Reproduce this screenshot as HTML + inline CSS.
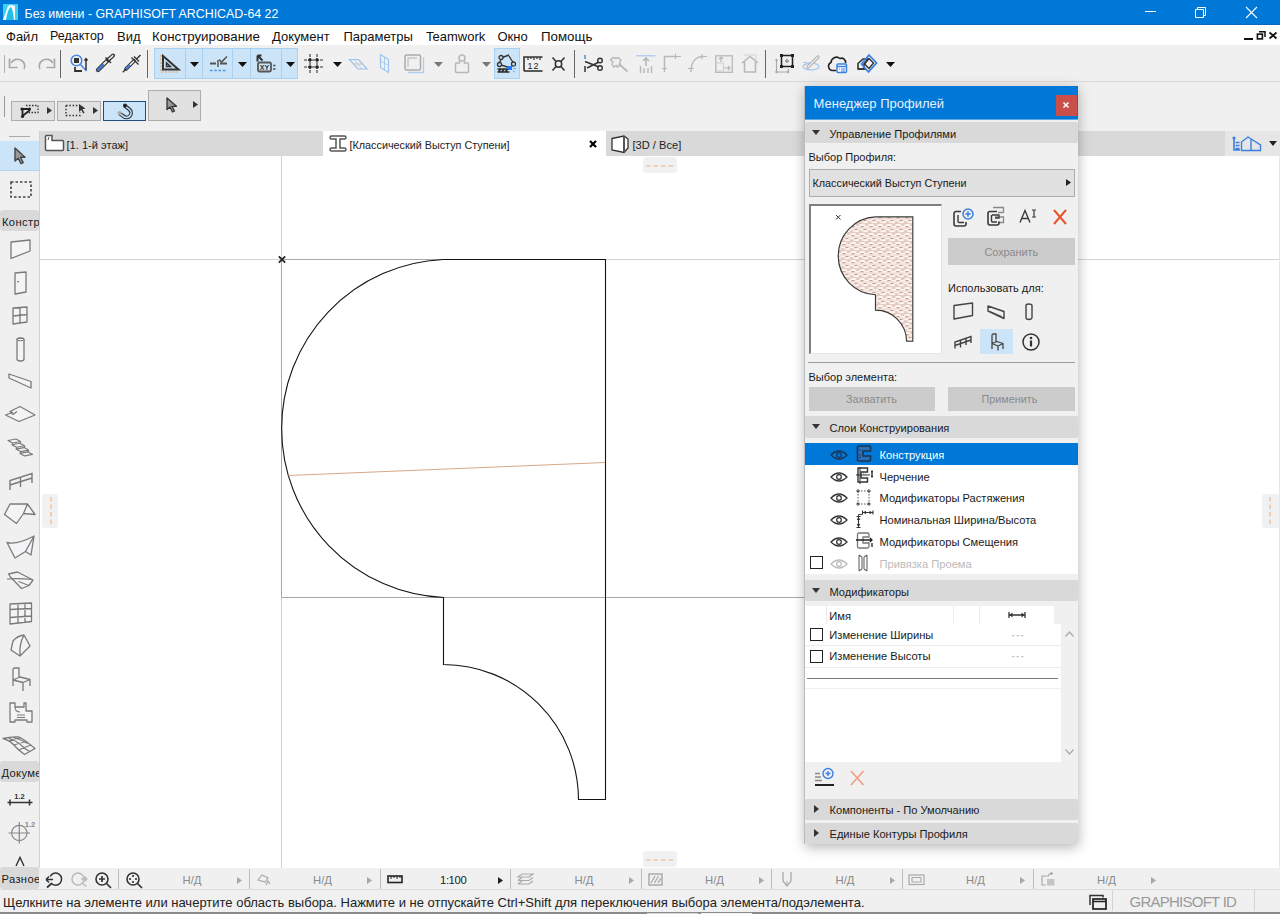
<!DOCTYPE html>
<html><head><meta charset="utf-8">
<style>
*{margin:0;padding:0;box-sizing:border-box}
html,body{width:1280px;height:914px;overflow:hidden;background:#f0f0f0;font-family:"Liberation Sans",sans-serif;font-size:12px;color:#1a1a1a}
.a{position:absolute}
svg{position:absolute;overflow:visible}
#title{left:0;top:0;width:1280px;height:25px;background:#0078d7;color:#fff;border-bottom:1px solid #0a68c0}
#menu{left:0;top:25px;width:1280px;height:20px;background:#fff}
#menu span{position:absolute;top:4px;font-size:13px;color:#111}
#tb1{left:0;top:45px;width:1280px;height:36px;background:#f0f0f0}
#tbline{left:0;top:81px;width:1280px;height:1px;background:#d8d8d8}
#tb2{left:0;top:82px;width:1280px;height:49px;background:#f0f0f0}
#tabs{left:40px;top:131px;width:1240px;height:25px;background:#d9d9d9}
#tbox{left:0;top:131px;width:40px;height:737px;background:#f0f0f0;border-right:1px solid #d0d0d0}
#draw{left:40px;top:156px;width:1240px;height:712px;background:#fff}
#status1{left:0;top:868px;width:1280px;height:21px;background:#f0f0f0}
#status2{left:0;top:889px;width:1280px;height:22px;background:#f0f0f0;border-top:1px solid #dcdcdc}
#bottom{left:0;top:912px;width:1280px;height:2px;background:#8a8a8a}
#panel{left:805px;top:86px;width:273px;height:758px;background:#f0f0f0;box-shadow:0 3px 12px rgba(0,0,0,.3)}
.sh{position:absolute;left:0;width:273px;height:21px;background:#d9d9d9;border-radius:2px}
.sh span{position:absolute;left:24.5px;top:6px;font-size:11.1px;color:#1a1a1a}
.sh i{position:absolute;left:7px;top:8px;width:0;height:0;border-left:4px solid transparent;border-right:4px solid transparent;border-top:5px solid #333}
.sh i.r{left:9px;top:6px;border-top:4px solid transparent;border-bottom:4px solid transparent;border-left:5px solid #333;border-right:0}
.t{position:absolute;white-space:nowrap}
</style></head><body>
<div id="title" class="a">
<svg style="left:3px;top:4px" width="15" height="16" viewBox="0 0 15 16"><rect width="15" height="16" fill="#3fd0f0"/><path d="M0 16 L5 2 Q8 0 12 2 L12 16 Z" fill="#f4fbff"/><path d="M3 16 Q5 4 8 3 Q10 6 11 16 Z" fill="#1fbfe8"/></svg>
<span class="t" style="left:24.5px;top:6.5px;font-size:12.4px;color:#fff">Без имени - GRAPHISOFT ARCHICAD-64 22</span>
<div class="a" style="left:1145px;top:11px;width:11px;height:1px;background:#fff"></div>
<svg style="left:1195px;top:7px" width="11" height="11" viewBox="0 0 11 11"><path d="M0.5 2.5h8v8h-8z M2.5 2.5v-2h8v8h-2" fill="none" stroke="#fff" stroke-width="1"/></svg>
<svg style="left:1246px;top:7px" width="11" height="11" viewBox="0 0 11 11"><path d="M0 0L11 11M11 0L0 11" stroke="#fff" stroke-width="1.1"/></svg>
</div>
<div id="menu" class="a">
<span style="left:6px">Файл</span><span style="left:50px;font-size:12.5px">Редактор</span><span style="left:117px">Вид</span><span style="left:152px;font-size:13.3px">Конструирование</span><span style="left:272px">Документ</span><span style="left:343.5px">Параметры</span><span style="left:426px">Teamwork</span><span style="left:497.5px">Окно</span><span style="left:541px;font-size:13.3px">Помощь</span>
<div class="a" style="left:1244px;top:13px;width:9px;height:2px;background:#111"></div>
<svg style="left:1256px;top:6px" width="10" height="10" viewBox="0 0 10 10"><rect x="1.4" y="3.1" width="5" height="4.8" fill="none" stroke="#111" stroke-width="1.6"/><path d="M3 0.8H9V6" fill="none" stroke="#111" stroke-width="1.5"/></svg>
<svg style="left:1269px;top:7px" width="8" height="7" viewBox="0 0 8 7"><path d="M0.5 0.5L7.5 6.5M7.5 0.5L0.5 6.5" stroke="#111" stroke-width="1.7"/></svg>
</div>
<div id="tb1" class="a">
<div class="a" style="left:3.5px;top:10px;width:1.5px;height:18px;background:#b0b0b0"></div>
<svg style="left:8px;top:11px" width="21" height="15" viewBox="0 0 21 15"><path d="M3 7 A7 6.5 0 1 1 16 13" fill="none" stroke="#a8a8a8" stroke-width="1.7"/><path d="M1.5 2.5v9h8" fill="none" stroke="#a8a8a8" stroke-width="1.7"/></svg>
<svg style="left:35px;top:11px" width="21" height="15" viewBox="0 0 21 15"><path d="M18 7 A7 6.5 0 1 0 5 13" fill="none" stroke="#a8a8a8" stroke-width="1.7"/><path d="M19.5 2.5v9h-8" fill="none" stroke="#a8a8a8" stroke-width="1.7"/></svg>
<div class="a" style="left:60px;top:5px;width:1px;height:28px;background:#666"></div>
<svg style="left:70px;top:9px" width="19" height="19" viewBox="0 0 19 19"><circle cx="6.5" cy="6.5" r="5.3" fill="none" stroke="#4a8ae0" stroke-width="1.6"/><rect x="4" y="4" width="5" height="5" fill="#333"/><path d="M10.5 10.5L16.5 17" stroke="#4a8ae0" stroke-width="1.6"/><path d="M16 16V5M14.5 6.5l1.5-1.8 1.5 1.8" stroke="#333" stroke-width="1.5" fill="none"/><path d="M5 13v4h7" stroke="#333" stroke-width="1.8" fill="none"/></svg>
<svg style="left:95px;top:9px" width="21" height="19" viewBox="0 0 21 19"><path d="M3 16L13.5 5.5" stroke="#333" stroke-width="4.4" stroke-linecap="round"/><path d="M3 16L13.5 5.5" stroke="#f0f0f0" stroke-width="2" stroke-linecap="round"/><path d="M3 16L8 11" stroke="#3a78d8" stroke-width="2.4" stroke-linecap="round"/><path d="M13 6L18 1.5" stroke="#333" stroke-width="4" stroke-linecap="round"/><path d="M13.5 5.5L17.8 1.7" stroke="#f0f0f0" stroke-width="1.6" stroke-linecap="round"/><path d="M10.5 3.5l5.5 5.5" stroke="#333" stroke-width="1.5"/></svg>
<svg style="left:122px;top:9px" width="20" height="19" viewBox="0 0 20 19"><path d="M0.8 18.2L3.5 15.5" stroke="#333" stroke-width="1.3"/><path d="M4 15L12 7" stroke="#333" stroke-width="3.8" stroke-linecap="round"/><path d="M4 15L12 7" stroke="#f0f0f0" stroke-width="1.6"/><path d="M4 15L8 11" stroke="#3a78d8" stroke-width="2.2"/><path d="M9.5 3.5l7 7M12 2.5l5 5M14.5 5L18.5 1" stroke="#333" stroke-width="1.4"/></svg>
<div class="a" style="left:147px;top:5px;width:1px;height:28px;background:#666"></div>
<div class="a" style="left:154px;top:3px;width:144px;height:31px;background:#cce4f7;border:1px solid #a8d0f0"></div>
<div class="a" style="left:185px;top:4px;width:1px;height:29px;background:#a8d0f0"></div>
<div class="a" style="left:201.5px;top:4px;width:1px;height:29px;background:#a8d0f0"></div>
<div class="a" style="left:232px;top:4px;width:1px;height:29px;background:#a8d0f0"></div>
<div class="a" style="left:250px;top:4px;width:1px;height:29px;background:#a8d0f0"></div>
<div class="a" style="left:280.5px;top:4px;width:1px;height:29px;background:#a8d0f0"></div>
<svg style="left:160px;top:9px" width="20" height="19" viewBox="0 0 20 19"><path d="M1 1v17h18" fill="none" stroke="#e0a060" stroke-width="1.2" stroke-dasharray="2 1.5"/><path d="M3 2v13.5h15.5z" fill="none" stroke="#333" stroke-width="2"/><path d="M6.5 9v3.5h4z" fill="none" stroke="#333" stroke-width="1.5"/></svg>
<svg style="left:189.5px;top:17px" width="9" height="5" viewBox="0 0 9 5"><path d="M0 0h9L4.5 5z" fill="#111"/></svg>
<svg style="left:210px;top:11px" width="18" height="16" viewBox="0 0 18 16"><path d="M0 7.5h6M10 7.5h7" stroke="#555" stroke-width="1.8"/><path d="M8 4v7" stroke="#555" stroke-width="1.5"/><path d="M9 3.5l2.5 2.5L17 0.5" fill="none" stroke="#555" stroke-width="1.6"/><path d="M0 14.5h17" stroke="#4a90e2" stroke-width="1.6" stroke-dasharray="2.5 1.8"/></svg>
<svg style="left:237.5px;top:17px" width="9" height="5" viewBox="0 0 9 5"><path d="M0 0h9L4.5 5z" fill="#111"/></svg>
<svg style="left:257px;top:10px" width="20" height="18" viewBox="0 0 20 18"><path d="M0.5 0.5v6M0.5 0.5h4M0.5 0.5l5 5" stroke="#333" stroke-width="2" fill="none"/><rect x="1" y="7.5" width="13" height="9" rx="1.5" fill="none" stroke="#555" stroke-width="1.8"/><text x="7.5" y="15" font-size="7" font-weight="bold" font-family="Liberation Sans" text-anchor="middle" fill="#333">XY</text><path d="M16 10.5h2.5M16 14h2.5" stroke="#555" stroke-width="1.6"/></svg>
<svg style="left:285.5px;top:17px" width="9" height="5" viewBox="0 0 9 5"><path d="M0 0h9L4.5 5z" fill="#111"/></svg>
<svg style="left:304px;top:9px" width="19" height="19" viewBox="0 0 19 19"><path d="M6 0v19M13 0v19M0 6h19M0 13h19" stroke="#333" stroke-width="1.1" stroke-dasharray="3 1"/><circle cx="6" cy="6" r="1.8" fill="#222"/><circle cx="13" cy="6" r="1.8" fill="#222"/><circle cx="6" cy="13" r="1.8" fill="#222"/><circle cx="13" cy="13" r="1.8" fill="#222"/></svg>
<svg style="left:333px;top:17px" width="9" height="5" viewBox="0 0 9 5"><path d="M0 0h9L4.5 5z" fill="#111"/></svg>
<svg style="left:348.5px;top:14px" width="19" height="11" viewBox="0 0 19 11"><path d="M0.5 0.5h9l8.5 9.5h-9z" fill="none" stroke="#9cc4ee" stroke-width="1.2"/><path d="M4.5 5h9" stroke="#c8c0a8" stroke-width="1"/><path d="M5 0.5l8 9.5" stroke="#9cc4ee" stroke-width="0.8"/></svg>
<svg style="left:380px;top:9px" width="9" height="19" viewBox="0 0 9 19"><path d="M0.5 0.5l8 5v13l-8-5z" fill="none" stroke="#9cc4ee" stroke-width="1.2"/><path d="M4.5 3v13M0.5 7l8 4.5" stroke="#9cc4ee" stroke-width="0.8"/></svg>
<svg style="left:403.5px;top:9px" width="20" height="19" viewBox="0 0 20 19"><path d="M4 18.5h15.5V3.5" fill="none" stroke="#aecdf0" stroke-width="1.3"/><rect x="1" y="1" width="15.5" height="15" rx="1.5" fill="none" stroke="#aaa" stroke-width="1.5"/><path d="M4 13V4h9" fill="none" stroke="#c4c4c4" stroke-width="1.3"/></svg>
<svg style="left:433.5px;top:17px" width="9" height="5" viewBox="0 0 9 5"><path d="M0 0h9L4.5 5z" fill="#777"/></svg>
<svg style="left:455px;top:9px" width="14" height="19" viewBox="0 0 14 19"><circle cx="7" cy="4" r="3" fill="none" stroke="#b8b8b8" stroke-width="1.5"/><path d="M4.5 6.5v2.5H1.5a1 1 0 0 0-1 1V17.5a1 1 0 0 0 1 1h11a1 1 0 0 0 1-1V10a1 1 0 0 0-1-1H9.5V6.5" fill="none" stroke="#b8b8b8" stroke-width="1.5"/></svg>
<svg style="left:482px;top:17px" width="9" height="5" viewBox="0 0 9 5"><path d="M0 0h9L4.5 5z" fill="#777"/></svg>
<div class="a" style="left:494px;top:3px;width:26px;height:31px;background:#cce4f7;border:1px solid #a8d0f0"></div>
<svg style="left:497px;top:9px" width="20" height="19" viewBox="0 0 20 19"><path d="M4 4L12 1M4 5L2 10.5M4 11L14 14M12 2L17 10" stroke="#333" stroke-width="1.4"/><circle cx="4" cy="3.5" r="2" fill="#cce4f7" stroke="#333" stroke-width="1.3"/><circle cx="2.5" cy="10.5" r="2" fill="#cce4f7" stroke="#333" stroke-width="1.3"/><circle cx="16.5" cy="10" r="2" fill="#cce4f7" stroke="#333" stroke-width="1.3"/><path d="M0.5 15h10M0.5 18h12M1 18l3-3M4.5 18l3-3M8 18l3-3" stroke="#2a2a2a" stroke-width="1.6"/><rect x="11" y="12" width="4" height="4" fill="#1f78ff"/><path d="M16 12l2-1M16.5 14.5h2.5M16 17l2 1" stroke="#5aa0f0" stroke-width="0.9"/></svg>
<svg style="left:522.5px;top:11px" width="20" height="16" viewBox="0 0 20 16"><path d="M1 15V1h18.5" fill="none" stroke="#333" stroke-width="1.6"/><path d="M1 15h18.5" stroke="#333" stroke-width="1.6"/><path d="M5 1v3M8 1v2M11 1v3M14 1v2M17 1v3" stroke="#333" stroke-width="1.2"/><text x="10.5" y="13" font-size="9" font-family="Liberation Sans" text-anchor="middle" fill="#222" letter-spacing="1">12</text></svg>
<svg style="left:552px;top:11.5px" width="13" height="14" viewBox="0 0 13 14"><circle cx="6.5" cy="7" r="3.2" fill="none" stroke="#333" stroke-width="1.5"/><path d="M0.5 0.5l3.5 4M12.5 0.5l-3.5 4M0.5 13.5l3.5-4M12.5 13.5l-3.5-4" stroke="#333" stroke-width="1.5"/></svg>
<div class="a" style="left:574px;top:5px;width:1px;height:28px;background:#666"></div>
<svg style="left:584px;top:9px" width="19" height="19" viewBox="0 0 19 19"><path d="M1 1v4" stroke="#4a90e2" stroke-width="1.5"/><path d="M1 12v6" stroke="#333" stroke-width="1.5"/><path d="M1 7.5L15 13M3 14L15 8" stroke="#333" stroke-width="1.5"/><circle cx="16" cy="6.5" r="2.3" fill="none" stroke="#333" stroke-width="1.4"/><circle cx="16" cy="14" r="2.3" fill="none" stroke="#333" stroke-width="1.4"/></svg>
<svg style="left:610px;top:11px" width="19" height="16" viewBox="0 0 19 16"><path d="M3 1.5l3 1 2-1 3 2.5-1.5 3 1 2-3 2-1-1.5-3 1.5-1.5-3 1-2-2.5-2z" fill="none" stroke="#b8b8b8" stroke-width="1.4"/><path d="M9 8l8.5 7.5" stroke="#b8b8b8" stroke-width="1.8"/></svg>
<svg style="left:635.5px;top:10px" width="20" height="19" viewBox="0 0 20 19"><path d="M0 0.8h19.5" stroke="#aac4ee" stroke-width="1.2"/><path d="M10 3v8M7 6l3-3 3 3" fill="none" stroke="#b8b8b8" stroke-width="1.6"/><path d="M4.5 11v7M8 13v5M12 13v5M15.5 11v7" stroke="#b8b8b8" stroke-width="1.4"/></svg>
<svg style="left:662px;top:9px" width="19" height="19" viewBox="0 0 19 19"><path d="M2.5 18V2.5h11" fill="none" stroke="#b8b8b8" stroke-width="1.5"/><path d="M0 14.5h5M13.5 0v5M12 2.5h7" stroke="#b8b8b8" stroke-width="1.2"/></svg>
<svg style="left:688px;top:9px" width="19" height="19" viewBox="0 0 19 19"><path d="M3 18C3 9 7 3 14 2.5" fill="none" stroke="#b8b8b8" stroke-width="1.5"/><path d="M0 14.5h6M14 0v5M12 2.5h7" stroke="#b8b8b8" stroke-width="1.2"/></svg>
<svg style="left:715px;top:9.5px" width="18" height="18" viewBox="0 0 18 18"><rect x="0.8" y="0.8" width="16.5" height="16.5" fill="none" stroke="#b8b8b8" stroke-width="1.3"/><path d="M6 7V2M4 4l2-2 2 2M9 13h6M13 11l2 2-2 2" fill="none" stroke="#b8b8b8" stroke-width="1.2"/><rect x="1.5" y="8" width="7" height="8" fill="none" stroke="#d0d0d0" stroke-width="1"/></svg>
<svg style="left:741px;top:9px" width="18" height="19" viewBox="0 0 18 19"><path d="M1 9L9 2.5 17 9M3.5 7.5V18h11V7.5" fill="none" stroke="#b8b8b8" stroke-width="1.6"/><path d="M3 1h12v5" fill="none" stroke="#d4d4d4" stroke-width="1"/></svg>
<div class="a" style="left:765px;top:5px;width:1px;height:28px;background:#666"></div>
<svg style="left:775px;top:9px" width="20" height="19" viewBox="0 0 20 19"><path d="M1.5 6v12h12V15" fill="none" stroke="#aaa" stroke-width="1.2"/><circle cx="1.5" cy="6" r="1.2" fill="#aaa"/><circle cx="1.5" cy="18" r="1.2" fill="#aaa"/><circle cx="13" cy="18" r="1.2" fill="#aaa"/><rect x="6.5" y="1.5" width="11" height="11" fill="none" stroke="#222" stroke-width="1.5"/><rect x="5" y="0" width="3" height="3" fill="#222"/><rect x="16" y="0" width="3" height="3" fill="#222"/><rect x="5" y="11" width="3" height="3" fill="#222"/><rect x="16" y="11" width="3" height="3" fill="#222"/><circle cx="12" cy="7" r="1.3" fill="none" stroke="#555" stroke-width="0.8"/></svg>
<svg style="left:802px;top:10px" width="19" height="16" viewBox="0 0 19 16"><ellipse cx="9" cy="11.5" rx="8" ry="3.5" fill="none" stroke="#a8c8f0" stroke-width="1.4"/><path d="M6 12L16 2" stroke="#aaa" stroke-width="3.2" stroke-linecap="round"/><path d="M6 12L16 2" stroke="#f0f0f0" stroke-width="1.4" stroke-linecap="round"/><path d="M1 7.5h4M2 9.5h3" stroke="#b0c4e0" stroke-width="0.9"/></svg>
<svg style="left:827.5px;top:9px" width="19" height="19" viewBox="0 0 19 19"><path d="M8 16.5H5A4.2 4.2 0 0 1 3 8.5 5.5 5.5 0 0 1 12 4.5 4 4 0 0 1 17.5 9" fill="none" stroke="#222" stroke-width="1.6"/><rect x="9" y="10" width="9.5" height="8.5" rx="1" fill="#fff" stroke="#3a80e0" stroke-width="1.5"/><path d="M9 12.5h9.5" stroke="#3a80e0" stroke-width="1.5"/><path d="M11 15h1M13 15h4M13 17h4" stroke="#3a80e0" stroke-width="1"/></svg>
<svg style="left:857px;top:9px" width="20" height="19" viewBox="0 0 20 19"><path d="M1 15V9.5L6 5h5l-4 5v5z" fill="none" stroke="#333" stroke-width="1.6"/><path d="M1 15h8" stroke="#333" stroke-width="1.6"/><path d="M4.5 10l7.5-9 7.5 8-8 9z" fill="none" stroke="#3a80e0" stroke-width="1.8"/><path d="M7.5 10l4.5-5.5 4.5 4.5-4.5 5.5z" fill="none" stroke="#333" stroke-width="1.4"/></svg>
<svg style="left:886px;top:17px" width="9" height="5" viewBox="0 0 9 5"><path d="M0 0h9L4.5 5z" fill="#111"/></svg>
</div>
<div id="tbline" class="a"></div>
<div id="tb2" class="a">
<div class="a" style="left:4px;top:14px;width:1px;height:21px;background:#999"></div>
<div class="a" style="left:11px;top:19px;width:44px;height:20px;background:#e1e1e1;border:1px solid #adadad"></div>
<svg style="left:19.5px;top:21.5px" width="19" height="14" viewBox="0 0 19 14"><path d="M6 1.5h12v7h-11" fill="none" stroke="#333" stroke-width="1.3" stroke-dasharray="1.5 1.5"/><path d="M1.5 5h8M2.5 5l0 8M2.5 12L10 6" stroke="#222" stroke-width="1.8"/><circle cx="2" cy="5" r="1.6" fill="#222"/><circle cx="2.5" cy="12.5" r="1.6" fill="#222"/><circle cx="9.5" cy="5" r="1.6" fill="#222"/></svg>
<svg style="left:47px;top:25px" width="5" height="7" viewBox="0 0 5 7"><path d="M0 0L5 3.5 0 7z" fill="#333"/></svg>
<div class="a" style="left:57px;top:19px;width:44px;height:20px;background:#e1e1e1;border:1px solid #adadad"></div>
<svg style="left:65px;top:21.5px" width="21" height="13" viewBox="0 0 21 13"><path d="M1 1.5h13M1 1.5v10h14v-3" fill="none" stroke="#333" stroke-width="1.4" stroke-dasharray="1.5 1.8"/><path d="M14 0l6.5 4.5-3 0.8 2 3.5-1.3 0.7-2-3.5-2.2 2z" fill="#333"/></svg>
<svg style="left:93px;top:25px" width="5" height="7" viewBox="0 0 5 7"><path d="M0 0L5 3.5 0 7z" fill="#333"/></svg>
<div class="a" style="left:103px;top:19px;width:43px;height:20px;background:#cce4f7;border:1.5px solid #1e4e7e"></div>
<svg style="left:116.5px;top:21px" width="17" height="16" viewBox="0 0 17 16"><path d="M7.5 2.5l5 4a4.5 4.5 0 0 1-6 6.8L2.5 10.5" fill="none" stroke="#2a3440" stroke-width="3.8"/><path d="M7.5 2.5l5 4a4.5 4.5 0 0 1-6 6.8L2.5 10.5" fill="none" stroke="#cce4f7" stroke-width="1.6"/><circle cx="8" cy="2.5" r="2" fill="#222"/><circle cx="2.5" cy="10" r="2" fill="#aaa"/></svg>
<div class="a" style="left:148px;top:8px;width:53px;height:31px;background:#e1e1e1;border:1px solid #adadad"></div>
<svg style="left:165.5px;top:96.5px;top:14.5px" width="12" height="16" viewBox="0 0 12 16"><path d="M1 1v11.5l3-2.5 2.5 5 2-1-2.5-4.7h4.5z" fill="#999" stroke="#333" stroke-width="1.3" stroke-linejoin="round"/></svg>
<svg style="left:193px;top:18.5px" width="5" height="7" viewBox="0 0 5 7"><path d="M0 0L5 3.5 0 7z" fill="#333"/></svg>
</div>
<div id="tabs" class="a">
<svg style="left:4px;top:4px" width="20" height="16" viewBox="0 0 20 16"><path d="M1.5 1.5a1 1 0 0 1 1-1h5.5v5h10.5a1 1 0 0 1 1 1v8a1 1 0 0 1-1 1H2.5a1 1 0 0 1-1-1z" fill="#fff" stroke="#555" stroke-width="1.5"/><path d="M4 5L5 2" stroke="#555" stroke-width="1"/></svg>
<span class="t" style="left:26.5px;top:7.5px;font-size:11.1px;color:#222">[1. 1-й этаж]</span>
<div class="a" style="left:282.5px;top:0;width:283.5px;height:25px;background:#fff"></div>
<svg style="left:288.5px;top:4px" width="18" height="17" viewBox="0 0 18 17"><path d="M2.5 1h13a1.5 1.5 0 0 1 0 3H11v9h4.5a1.5 1.5 0 0 1 0 3h-13a1.5 1.5 0 0 1 0-3H7V4H2.5a1.5 1.5 0 0 1 0-3z" fill="#fff" stroke="#555" stroke-width="1.5"/></svg>
<span class="t" style="left:309.5px;top:7.5px;font-size:10.8px;color:#222">[Классический Выступ Ступени]</span>
<svg style="left:548.5px;top:8.5px" width="8" height="8" viewBox="0 0 8 8"><path d="M1 1L7 7M7 1L1 7" stroke="#000" stroke-width="2.2"/></svg>
<svg style="left:571px;top:4px" width="18" height="18" viewBox="0 0 18 18"><path d="M1 3.5l12-2.5 4 3v9l-4 4.5-12-2.5z" fill="#fff" stroke="#333" stroke-width="1.3"/><path d="M13 1v16" stroke="#555" stroke-width="2"/></svg>
<span class="t" style="left:592.5px;top:7.5px;font-size:11.1px;color:#222">[3D / Все]</span>
<div class="a" style="left:1185px;top:0;width:55px;height:25px;background:#e6e6e6"></div>
<svg style="left:1192px;top:4.5px" width="30" height="16" viewBox="0 0 30 16"><circle cx="2" cy="2" r="1.6" fill="#3a80e0"/><path d="M2 3v11h6M3.5 6.5h4M3.5 9.5h4M3.5 12.5h4" fill="none" stroke="#3a80e0" stroke-width="1.6"/><path d="M9.5 14.5V6l6.5-5 12.5 8v5.5z M19 3v11.5M16 1l12.5 8" fill="none" stroke="#3a80e0" stroke-width="1.4"/></svg>
<svg style="left:1228.5px;top:10px" width="8" height="5" viewBox="0 0 8 5"><path d="M0 0h8L4 5z" fill="#222"/></svg>
</div>
<div id="tbox" class="a">
<div class="a" style="left:9px;top:5px;width:21px;height:1px;background:#aaa"></div>
<div class="a" style="left:0;top:10px;width:39px;height:30px;background:#cce4f7;border-bottom:1px solid #b4d4f0"></div>
<svg style="left:14px;top:16px" width="13" height="18" viewBox="0 0 13 18"><path d="M1 1v13l3.2-2.8 2.8 5.5 2.2-1.1-2.7-5.4H11z" fill="#999" stroke="#444" stroke-width="1.4" stroke-linejoin="round"/></svg>
<svg style="left:9.5px;top:50px" width="22" height="17" viewBox="0 0 22 17"><rect x="1" y="1" width="20" height="15" fill="none" stroke="#444" stroke-width="1.6" stroke-dasharray="2.5 2"/></svg>
<div class="a" style="left:0;top:79px;width:39px;height:21px;background:#d9d9d9;border-radius:3px;overflow:hidden"><span class="t" style="left:2px;top:5.5px;font-size:11.2px;letter-spacing:0.35px;color:#1a1a1a">Конструирование</span></div>
<svg style="left:10px;top:108px" width="21" height="21" viewBox="0 0 21 21"><path d="M1 3L20 1V12L1 19.5z" fill="#f4f4f6" stroke="#7a7a7a" stroke-width="1.3" stroke-linejoin="round"/></svg><svg style="left:14px;top:140px" width="13" height="24" viewBox="0 0 13 24"><path d="M1 2L12 1V21L1 23z" fill="#f4f4f6" stroke="#7a7a7a" stroke-width="1.3" stroke-linejoin="round"/><path d="M3 11l2-0.6" stroke="#7a7a7a" stroke-width="1.2"/></svg><svg style="left:12px;top:175px" width="16" height="19" viewBox="0 0 16 19"><path d="M1 2L15 1V16L1 18z M8 1.5V17 M1 10L15 8.5" fill="#f4f4f6" stroke="#7a7a7a" stroke-width="1.3" stroke-linejoin="round"/></svg><svg style="left:15.5px;top:206px" width="9" height="25" viewBox="0 0 9 25"><path d="M1 2.5a3.5 1.5 0 0 1 7 0V22a3.5 2 0 0 1-7 0z" fill="#f4f4f6" stroke="#7a7a7a" stroke-width="1.3" stroke-linejoin="round"/><ellipse cx="4.5" cy="2.5" rx="3.5" ry="1.3" fill="none" stroke="#7a7a7a" stroke-width="1"/></svg><svg style="left:8px;top:242px" width="24" height="17" viewBox="0 0 24 17"><path d="M1 1L23 8.5V15L1 5z M1 1v4 M23 8.5v6.5" fill="#f4f4f6" stroke="#7a7a7a" stroke-width="1.3" stroke-linejoin="round"/></svg><svg style="left:4.5px;top:274px" width="31" height="17" viewBox="0 0 31 17"><path d="M5 6.5L15 1.5l15 8.5-16 6.5L0.5 10l7-2.5z" fill="#f4f4f6" stroke="#7a7a7a" stroke-width="1.3" stroke-linejoin="round"/><path d="M5 6.5L8 9.5 12 6.5" fill="none" stroke="#7a7a7a" stroke-width="1.2"/></svg><svg style="left:7px;top:306.5px" width="28" height="21" viewBox="0 0 28 21"><path d="M1.0 2.5L9.0 1.0L13.5 3.5L5.5 5.0z" fill="#f4f4f6" stroke="#7a7a7a" stroke-width="1.15" stroke-linejoin="round"/><path d="M5.5 5.0V7.3M13.5 3.5V5.8" stroke="#7a7a7a" stroke-width="1.1"/><path d="M5.0 6.8L13.0 5.3L17.5 7.8L9.5 9.3z" fill="#f4f4f6" stroke="#7a7a7a" stroke-width="1.15" stroke-linejoin="round"/><path d="M9.5 9.3V11.6M17.5 7.8V10.1" stroke="#7a7a7a" stroke-width="1.1"/><path d="M9.0 11.1L17.0 9.6L21.5 12.1L13.5 13.6z" fill="#f4f4f6" stroke="#7a7a7a" stroke-width="1.15" stroke-linejoin="round"/><path d="M13.5 13.6V15.899999999999999M21.5 12.1V14.399999999999999" stroke="#7a7a7a" stroke-width="1.1"/><path d="M13.0 15.399999999999999L21.0 13.899999999999999L25.5 16.4L17.5 17.9z" fill="#f4f4f6" stroke="#7a7a7a" stroke-width="1.15" stroke-linejoin="round"/></svg><svg style="left:8.5px;top:341px" width="24" height="19" viewBox="0 0 24 19"><path d="M1 18V8.5L23 1.5V11 M1 13L23 6 M11.5 5v10" fill="none" stroke="#7a7a7a" stroke-width="1.4"/></svg><svg style="left:4px;top:372px" width="32" height="22" viewBox="0 0 32 22"><path d="M6 1H23.5L31 11.5 19.5 10.5 12.5 20.5 0.5 11.5z M23.5 1L19.5 10.5" fill="#f4f4f6" stroke="#7a7a7a" stroke-width="1.3" stroke-linejoin="round"/></svg><svg style="left:6px;top:404px" width="29" height="24" viewBox="0 0 29 24"><path d="M1 7.5Q11 10 28 1L25 20 19.5 16.5 9 23z M19.5 16.5L28 1" fill="#f4f4f6" stroke="#7a7a7a" stroke-width="1.3" stroke-linejoin="round"/></svg><svg style="left:6.5px;top:440px" width="27" height="19" viewBox="0 0 27 19"><path d="M1.5 3L10.5 1 26 9 22 14.5 14.5 17.5 3.5 6z" fill="#f4f4f6" stroke="#7a7a7a" stroke-width="1.3" stroke-linejoin="round"/><path d="M0 8Q12 7 25 8.5M11.5 10.5L22 14.5" fill="none" stroke="#7a7a7a" stroke-width="1.2"/></svg><svg style="left:8.5px;top:471px" width="24" height="23" viewBox="0 0 24 23"><path d="M1 2L22.5 1V19.5L1 22z M1 7.5L22.5 6.5 M1 15.5L22.5 14 M9 1.7V21.3 M16 1.3V20.6" fill="#f4f4f6" stroke="#7a7a7a" stroke-width="1.3" stroke-linejoin="round"/></svg><svg style="left:9.5px;top:503px" width="21" height="23" viewBox="0 0 21 23"><path d="M1 16L3 7Q7 2 14 1L20 12 10 22z M14 1Q9 10 10 22" fill="#f4f4f6" stroke="#7a7a7a" stroke-width="1.3" stroke-linejoin="round"/></svg><svg style="left:12px;top:536px" width="19" height="25" viewBox="0 0 19 25"><path d="M1 17V3Q1 1 3 1H7V11 M1 13L8 10 18 12.5 11 15.5z M1 13V19 M18 12.5V19 M11 15.5V24" fill="#f4f4f6" stroke="#7a7a7a" stroke-width="1.3" stroke-linejoin="round"/></svg><svg style="left:8.5px;top:571px" width="24" height="21" viewBox="0 0 24 21"><path d="M1 1H6V5H15V1H17V9H23V20H18V18H6V20H1z" fill="#f4f4f6" stroke="#7a7a7a" stroke-width="1.3" stroke-linejoin="round"/><path d="M6 5Q6 10 11 10" fill="none" stroke="#7a7a7a" stroke-width="1.1"/><path d="M8 13H16M8 15.5H16" stroke="#7a7a7a" stroke-width="1.2"/></svg><svg style="left:2px;top:605px" width="34" height="20" viewBox="0 0 34 20"><path d="M1 2.5Q9 0.5 17 1Q23 4 33 12.5L22.5 18.5Q16 14 12 9Q7 4 1 2.5z" fill="#f4f4f6" stroke="#7a7a7a" stroke-width="1.3" stroke-linejoin="round"/><path d="M6.5 2Q15 5 20 10Q24 14 28 15.5M11.5 1.2Q20 4 25.5 7.5 M7 4.5Q13 2.5 19 2M12 9Q18 7 25 5.5M17 14Q23 11 29 9" fill="none" stroke="#7a7a7a" stroke-width="1.1"/></svg>
<div class="a" style="left:0;top:630px;width:39px;height:21px;background:#d9d9d9;border-radius:3px;overflow:hidden"><span class="t" style="left:1.5px;top:5.5px;font-size:11.2px;letter-spacing:0.35px;color:#1a1a1a">Документирование</span></div>
<svg style="left:7px;top:662px" width="26" height="14" viewBox="0 0 26 14"><text x="12.5" y="5.5" font-size="7.5" font-weight="bold" font-family="Liberation Sans" text-anchor="middle" fill="#333">1.2</text><path d="M0.5 9.5h25M3 6.5v6M22.5 6.5v6" stroke="#333" stroke-width="1.5"/></svg>
<svg style="left:8px;top:690px" width="28" height="23" viewBox="0 0 28 23"><circle cx="11.3" cy="12" r="7.7" fill="none" stroke="#888" stroke-width="1.2"/><path d="M11.3 1v21.5M0.5 12h21.5" stroke="#888" stroke-width="1.2"/><text x="22" y="5.5" font-size="7.5" font-weight="bold" font-family="Liberation Sans" text-anchor="middle" fill="#888">1.2</text></svg>
<svg style="left:15px;top:726px" width="10" height="9" viewBox="0 0 10 9"><path d="M1 9L5 0.5 9 9" fill="none" stroke="#333" stroke-width="1.4"/></svg>
</div>
<div id="draw" class="a">
<svg style="left:0;top:0" width="1240" height="712" viewBox="40 156 1240 712">
<path d="M40 259.5H1280" stroke="#d4d4d4" stroke-width="1"/>
<path d="M281.5 156V868" stroke="#d0d0d0" stroke-width="1"/>
<path d="M281.5 259.5V597.5H805M281.5 259.5H443" stroke="#a8a8a8" stroke-width="1" fill="none"/>
<path d="M443 259.5H605.5V799.5H578.5A135.5 135.5 0 0 0 443.5 664.5V597.5A169.17 169.17 0 0 1 443 259.5" fill="none" stroke="#141414" stroke-width="1.1"/>
<path d="M288.5 475.5L605 462.5" stroke="#d6a88a" stroke-width="1"/>
<path d="M278.8 256.3l6.4 6.4M285.2 256.3l-6.4 6.4" stroke="#222" stroke-width="1.7"/>
</svg>
<div class="a" style="left:602.5px;top:1px;width:34px;height:16px;background:#f0f1f3;border-radius:3px"></div>
<svg style="left:605.5px;top:9px" width="28" height="2" viewBox="0 0 28 2"><path d="M0 1H28" stroke="#f4b47c" stroke-width="1.2" stroke-dasharray="4.5 3"/></svg>
<div class="a" style="left:602.5px;top:695px;width:34px;height:16px;background:#f0f1f3;border-radius:3px"></div>
<svg style="left:605.5px;top:703px" width="28" height="2" viewBox="0 0 28 2"><path d="M0 1H28" stroke="#f4b47c" stroke-width="1.2" stroke-dasharray="4.5 3"/></svg>
<div class="a" style="left:1.5px;top:338px;width:16px;height:34px;background:#f0f1f3;border-radius:3px"></div>
<svg style="left:9.5px;top:341px" width="2" height="28" viewBox="0 0 2 28"><path d="M1 0V28" stroke="#f4b47c" stroke-width="1.2" stroke-dasharray="4.5 3"/></svg>
<div class="a" style="left:1221.5px;top:338px;width:18.5px;height:34px;background:#f0f1f3;border-radius:3px"></div>
<svg style="left:1228.5px;top:341px" width="2" height="28" viewBox="0 0 2 28"><path d="M1 0V28" stroke="#f4b47c" stroke-width="1.2" stroke-dasharray="4.5 3"/></svg>
<div class="a" style="left:1238.5px;top:338px;width:1.5px;height:34px;background:#8a8a8a"></div>
<div class="a" style="left:1239px;top:0;width:1px;height:712px;background:#e6e6e6"></div>
</div>
<div id="status1" class="a">
<div class="a" style="left:0;top:-1px;width:38.5px;height:22px;background:#d9d9d9;border-radius:3px;overflow:hidden"><span class="t" style="left:1.5px;top:6px;font-size:11.2px;letter-spacing:0.35px;color:#1a1a1a">Разное</span></div>
<svg style="left:44.5px;top:3.5px" width="18" height="16" viewBox="0 0 18 16"><path d="M5.2 4.5A6 6 0 1 1 6 11" fill="none" stroke="#333" stroke-width="1.5"/><path d="M1 7.5h7M1 7.5l3-3M1 7.5l3 3" fill="none" stroke="#333" stroke-width="1.5"/><path d="M6.5 11.5L2 15.5" stroke="#333" stroke-width="1.7"/></svg><svg style="left:69.5px;top:3.5px" width="18" height="15" viewBox="0 0 18 15"><circle cx="8" cy="7" r="6" fill="none" stroke="#bbb" stroke-width="1.5"/><path d="M11 7h6M17 7l-2.5-2.5M17 7l-2.5 2.5M12 11l4.5 3.5" fill="none" stroke="#bbb" stroke-width="1.5"/></svg><svg style="left:95px;top:3.5px" width="17" height="16" viewBox="0 0 17 16"><circle cx="7" cy="7" r="6" fill="none" stroke="#333" stroke-width="1.6"/><path d="M7 4v6M4 7h6M11.5 11.5l4.5 4.5" fill="none" stroke="#333" stroke-width="1.7"/></svg><svg style="left:126px;top:3.5px" width="17" height="16" viewBox="0 0 17 16"><circle cx="7" cy="7" r="6" fill="none" stroke="#333" stroke-width="1.6"/><circle cx="7" cy="4" r="1.1" fill="#333"/><circle cx="7" cy="10" r="1.1" fill="#333"/><circle cx="4" cy="7" r="1.1" fill="#333"/><circle cx="10" cy="7" r="1.1" fill="#333"/><path d="M11.5 11.5l4.5 4.5" stroke="#333" stroke-width="1.7"/></svg>
<div class="a" style="left:118px;top:1px;width:1px;height:20px;background:#bdbdbd"></div><span class="t" style="left:182px;top:5.5px;width:20px;text-align:center;font-size:11.3px;color:#8a8a8a">Н/Д</span><svg style="left:236.5px;top:8.5px" width="5" height="7" viewBox="0 0 5 7"><path d="M0 0L5 3.5 0 7z" fill="#a8a8a8"/></svg><svg style="left:257px;top:5.5px" width="15" height="12" viewBox="0 0 15 12"><path d="M1 6l4-5 6 3-3 4z" fill="none" stroke="#aaa" stroke-width="1.2"/><path d="M9 11l2-4 2 3" fill="none" stroke="#aaa" stroke-width="1.2"/></svg>
<div class="a" style="left:248.5px;top:1px;width:1px;height:20px;background:#bdbdbd"></div><span class="t" style="left:312.5px;top:5.5px;width:20px;text-align:center;font-size:11.3px;color:#8a8a8a">Н/Д</span><svg style="left:367.0px;top:8.5px" width="5" height="7" viewBox="0 0 5 7"><path d="M0 0L5 3.5 0 7z" fill="#a8a8a8"/></svg>
<div class="a" style="left:379.5px;top:1px;width:1px;height:20px;background:#bdbdbd"></div><span class="t" style="left:440px;top:5.5px;font-size:11.3px;letter-spacing:-0.4px;color:#222">1:100</span><svg style="left:498.0px;top:8.5px" width="5" height="7" viewBox="0 0 5 7"><path d="M0 0L5 3.5 0 7z" fill="#222"/></svg><svg style="left:387px;top:7px" width="16" height="8" viewBox="0 0 16 8"><rect x="1" y="1" width="14" height="6.5" fill="none" stroke="#222" stroke-width="1.6"/><path d="M4 1v3M7 1v2M10 1v3M13 1v2" stroke="#222" stroke-width="1"/></svg>
<div class="a" style="left:510px;top:1px;width:1px;height:20px;background:#bdbdbd"></div><span class="t" style="left:574px;top:5.5px;width:20px;text-align:center;font-size:11.3px;color:#8a8a8a">Н/Д</span><svg style="left:628.5px;top:8.5px" width="5" height="7" viewBox="0 0 5 7"><path d="M0 0L5 3.5 0 7z" fill="#a8a8a8"/></svg><svg style="left:517px;top:4.5px" width="17" height="14" viewBox="0 0 17 14"><path d="M1 4l4-3h11l-4 3z M1 7.5l4-3M16 4.5l-4 3H1 M1 11l4-3M16 8l-4 3H1" fill="none" stroke="#aaa" stroke-width="1.2"/></svg>
<div class="a" style="left:640.5px;top:1px;width:1px;height:20px;background:#bdbdbd"></div><span class="t" style="left:704.5px;top:5.5px;width:20px;text-align:center;font-size:11.3px;color:#8a8a8a">Н/Д</span><svg style="left:759.0px;top:8.5px" width="5" height="7" viewBox="0 0 5 7"><path d="M0 0L5 3.5 0 7z" fill="#a8a8a8"/></svg><svg style="left:648px;top:4.5px" width="15" height="13" viewBox="0 0 15 13"><rect x="1" y="1" width="13" height="11" fill="none" stroke="#aaa" stroke-width="1.5"/><path d="M3 10l4-7M6.5 10l4-7M10 10l3-5" stroke="#aaa" stroke-width="1.3"/></svg>
<div class="a" style="left:771px;top:1px;width:1px;height:20px;background:#bdbdbd"></div><span class="t" style="left:835px;top:5.5px;width:20px;text-align:center;font-size:11.3px;color:#8a8a8a">Н/Д</span><svg style="left:889.5px;top:8.5px" width="5" height="7" viewBox="0 0 5 7"><path d="M0 0L5 3.5 0 7z" fill="#a8a8a8"/></svg><svg style="left:782px;top:4px" width="10" height="15" viewBox="0 0 10 15"><path d="M1 0v9l4 5 4-5V0" fill="none" stroke="#aaa" stroke-width="1.3"/><path d="M5 9v5" stroke="#aaa" stroke-width="1"/></svg>
<div class="a" style="left:901.5px;top:1px;width:1px;height:20px;background:#bdbdbd"></div><span class="t" style="left:965.5px;top:5.5px;width:20px;text-align:center;font-size:11.3px;color:#8a8a8a">Н/Д</span><svg style="left:1020.0px;top:8.5px" width="5" height="7" viewBox="0 0 5 7"><path d="M0 0L5 3.5 0 7z" fill="#a8a8a8"/></svg><svg style="left:908px;top:6px" width="17" height="11" viewBox="0 0 17 11"><rect x="1" y="1" width="15" height="9.5" fill="none" stroke="#aaa" stroke-width="1.2"/><rect x="4" y="3.5" width="9" height="4.5" rx="0.5" fill="none" stroke="#aaa" stroke-width="1.2"/></svg>
<div class="a" style="left:1032.5px;top:1px;width:1px;height:20px;background:#bdbdbd"></div><span class="t" style="left:1096.5px;top:5.5px;width:20px;text-align:center;font-size:11.3px;color:#8a8a8a">Н/Д</span><svg style="left:1151.0px;top:8.5px" width="5" height="7" viewBox="0 0 5 7"><path d="M0 0L5 3.5 0 7z" fill="#a8a8a8"/></svg><svg style="left:1041px;top:4px" width="14" height="14" viewBox="0 0 14 14"><path d="M5 13H1V4h5" fill="none" stroke="#aaa" stroke-width="1.2"/><rect x="6" y="7" width="7.5" height="6.5" fill="#c4c4c4"/><path d="M7 5Q7 1 11 1.5M9.5 0l2 1.5-2 1.5" fill="none" stroke="#aaa" stroke-width="1.1"/></svg>
</div>
<div id="status2" class="a">
<span class="t" style="left:3px;top:5px;font-size:13px;color:#222">Щелкните на элементе или начертите область выбора. Нажмите и не отпускайте Ctrl+Shift для переключения выбора элемента/подэлемента.</span>
<svg style="left:1089px;top:3.5px" width="18" height="16" viewBox="0 0 18 16"><path d="M1 11V1.5h13v2" fill="none" stroke="#333" stroke-width="1.5"/><rect x="4" y="5" width="13" height="10" fill="none" stroke="#222" stroke-width="1.7"/><path d="M4 7.5h13" stroke="#222" stroke-width="1.5"/></svg>
<div class="a" style="left:1112px;top:0;width:1px;height:21px;background:#d4d4d4"></div>
<span class="t" style="left:1129.5px;top:3px;font-size:15px;letter-spacing:-0.75px;color:#9a9a9a">GRAPHISOFT ID</span>
<div class="a" style="left:1254px;top:0;width:1px;height:21px;background:#d4d4d4"></div>
</div>
<div id="bottom" class="a"><div class="a" style="left:647px;top:0.5px;width:51px;height:1.5px;background:#d8d8d8"></div><div class="a" style="left:700.5px;top:0.5px;width:51.5px;height:1.5px;background:#f4f4f4"></div></div>
<div id="panel" class="a"><div class="a" style="left:-1px;top:0;width:1px;height:758px;background:#b8bcc0"></div><div class="a" style="left:0px;top:0px;width:273px;height:33px;background:#0078d7"></div>
<div class="a" style="left:0px;top:33px;width:273px;height:1px;background:#5aa8e8"></div>
<span class="t" style="left:8.5px;top:10px;font-size:13px;color:#e6f2ff;">Менеджер Профилей</span>
<div class="a" style="left:250.5px;top:8.5px;width:21.0px;height:21.0px;background:#c94f4b"></div>
<svg style="left:258px;top:16px" width="6" height="6" viewBox="0 0 6 6"><path d="M0.5 0.5l5 5M5.5 0.5l-5 5" stroke="#fff" stroke-width="1.6"/></svg>
<div class="sh" style="top:35.5px;height:21.5px"><i></i><span>Управление Профилями</span></div>
<span class="t" style="left:3.5px;top:64.5px;font-size:11px;color:#1a1a1a;">Выбор Профиля:</span>
<div class="a" style="left:4px;top:82.5px;width:266px;height:28.5px;background:#e1e1e1;border:1px solid #adadad"></div>
<span class="t" style="left:7.5px;top:90.5px;font-size:10.8px;color:#1a1a1a;">Классический Выступ Ступени</span>
<svg style="left:261px;top:92.5px" width="5" height="7" viewBox="0 0 5 7"><path d="M0 0L5 3.5 0 7z" fill="#222"/></svg>
<div class="a" style="left:3.5px;top:117.5px;width:133.5px;height:150.5px;background:#fff;border-top:2px solid #808080;border-left:2px solid #808080;border-right:1px solid #e4e4e4;border-bottom:1px solid #e4e4e4"></div>
<svg style="left:0;top:0" width="273" height="758" viewBox="805 86 273 758"><defs><pattern id="hb" width="9" height="9" patternUnits="userSpaceOnUse" patternTransform="scale(4.342)"><rect width="9" height="9" fill="#fffaf8"/><path d="M0 0.5H3.2M4.5 2H7.7M1.5 5H4.7M6 6.5H9.2" stroke="#bf9484" stroke-width="1"/><path d="M0 3.5H9M0 8H9" stroke="#e6c8bc" stroke-width="1"/><path d="M3.5 0.5H4.5M8 2H9M0 2H0.5M5 5H6M0 6.5H1" stroke="#e8d4cc" stroke-width="1"/></pattern></defs><g transform="translate(838.3 216.9) scale(0.2303) translate(-282 -259.5)"><path d="M443 259.5H605.5V799.5H578.5A135.5 135.5 0 0 0 443.5 664.5V597.5A169.17 169.17 0 0 1 443 259.5z" fill="url(#hb)" stroke="#3a3a3a" stroke-width="5"/></g><path d="M836 215l4.5 4.5M840.5 215l-4.5 4.5" stroke="#333" stroke-width="1"/></svg>
<svg style="left:148px;top:121.5px" width="22" height="19" viewBox="0 0 22 19"><path d="M8 3.5H3a2 2 0 0 0-2 2V16a2 2 0 0 0 2 2h8a2 2 0 0 0 2-2v-2" fill="none" stroke="#3a3a3a" stroke-width="1.6"/><path d="M5 7v6.5a1 1 0 0 0 1 1h5" fill="none" stroke="#3a3a3a" stroke-width="1.4"/><circle cx="15" cy="6" r="5" fill="#f0f0f0" stroke="#3a80e0" stroke-width="1.5"/><path d="M15 3.3v5.4M12.3 6h5.4" stroke="#3a80e0" stroke-width="1.5"/></svg>
<svg style="left:182px;top:120px" width="18" height="20" viewBox="0 0 18 20"><path d="M6 1.5h10.5v5M11 6.5h5.5M8 11h8.5v5.5H11" fill="none" stroke="#888" stroke-width="1.3"/><path d="M10 5.5H3a2 2 0 0 0-2 2V17a2 2 0 0 0 2 2h7a2 2 0 0 0 2-2v-1.5" fill="none" stroke="#3a3a3a" stroke-width="1.6"/><path d="M4.5 9v6a1 1 0 0 0 1 1H10" fill="none" stroke="#3a3a3a" stroke-width="1.4"/><path d="M5 9h7V12H8" fill="none" stroke="#3a3a3a" stroke-width="1.3"/></svg>
<svg style="left:213.5px;top:123px" width="19" height="14" viewBox="0 0 19 14"><path d="M1 13.5L6 1.5 11 13.5M2.8 9.5h6.4" fill="none" stroke="#3a3a3a" stroke-width="1.4"/><path d="M13 1h4M15 1v7M13 8h4" fill="none" stroke="#3a3a3a" stroke-width="1.2"/></svg>
<svg style="left:248px;top:122.5px" width="14" height="16" viewBox="0 0 14 16"><path d="M1 1l12 14M13 1L1 15" stroke="#e8522a" stroke-width="2"/></svg>
<div class="a" style="left:143px;top:152px;width:127px;height:26.5px;background:#cccccc"></div>
<span class="t" style="left:179.5px;top:159.5px;font-size:10.8px;color:#8a8a8a;">Сохранить</span>
<span class="t" style="left:143px;top:195.5px;font-size:11px;color:#1a1a1a;">Использовать для:</span>
<svg style="left:148px;top:216px" width="21" height="18" viewBox="0 0 21 18"><path d="M1 3.5L19.5 1v12.5L1 17z" fill="none" stroke="#444" stroke-width="1.4" stroke-linejoin="round"/></svg>
<svg style="left:182px;top:218.5px" width="18" height="14" viewBox="0 0 18 14"><path d="M1 1l16 5.5v7L1 6z M1 1v5M17 6.5v7" fill="none" stroke="#444" stroke-width="1.4" stroke-linejoin="round"/><path d="M3 6.5l12 5" stroke="#444" stroke-width="0.8"/></svg>
<svg style="left:219.5px;top:217px" width="8" height="17" viewBox="0 0 8 17"><path d="M1 2.5a3 1.5 0 0 1 6 0V14.5a3 2 0 0 1-6 0z" fill="none" stroke="#444" stroke-width="1.4"/></svg>
<svg style="left:149px;top:248.5px" width="18" height="14" viewBox="0 0 18 14"><path d="M1 13.5V7L17 1.5V8M1 10.5L17 5M6.5 5v7.5M12 3.5v6.5" fill="none" stroke="#444" stroke-width="1.4"/></svg>
<div class="a" style="left:174.5px;top:242.5px;width:33.5px;height:25.5px;background:#cce4f7"></div>
<svg style="left:185.5px;top:246.5px" width="13" height="18" viewBox="0 0 13 18"><path d="M1 11V2.5Q1 1 2.5 1H5v7.5 M1 10.5L6 8.5 12 10.5 7 13z M1 10.5V16M12 10.5V16M7 13V17.5" fill="none" stroke="#444" stroke-width="1.3" stroke-linejoin="round"/></svg>
<svg style="left:217px;top:246.5px" width="18" height="18" viewBox="0 0 18 18"><circle cx="9" cy="9" r="8" fill="none" stroke="#333" stroke-width="1.5"/><circle cx="9" cy="5" r="1.3" fill="#333"/><path d="M9 7.5V13.5" stroke="#333" stroke-width="2.2"/></svg>
<div class="a" style="left:3px;top:276px;width:267px;height:1px;background:#9a9a9a"></div>
<span class="t" style="left:3.5px;top:284.5px;font-size:11px;color:#1a1a1a;">Выбор элемента:</span>
<div class="a" style="left:4px;top:300.5px;width:126px;height:24.0px;background:#cccccc"></div>
<span class="t" style="left:41px;top:307px;font-size:10.8px;color:#8a8a8a;">Захватить</span>
<div class="a" style="left:143px;top:300.5px;width:127px;height:24.0px;background:#cccccc"></div>
<span class="t" style="left:176.5px;top:307px;font-size:10.8px;color:#8a8a8a;">Применить</span>
<div class="sh" style="top:330px;height:21.5px"><i></i><span>Слои Конструирования</span></div>
<div class="a" style="left:0px;top:357px;width:273px;height:130.5px;background:#fff"></div>
<div class="a" style="left:0px;top:357px;width:273px;height:21.5px;background:#0078d7"></div>
<svg style="left:25px;top:363.5px" width="18" height="10" viewBox="0 0 18 10"><path d="M1 5Q9 -3 17 5Q9 13 1 5z" fill="none" stroke="#1a3552" stroke-width="1.25"/><circle cx="9" cy="5" r="2.3" fill="none" stroke="#1a3552" stroke-width="1.25"/></svg>
<span class="t" style="left:74.5px;top:362.8px;font-size:11.15px;color:#fff;">Конструкция</span>
<svg style="left:25px;top:385.5px" width="18" height="10" viewBox="0 0 18 10"><path d="M1 5Q9 -3 17 5Q9 13 1 5z" fill="none" stroke="#333" stroke-width="1.25"/><circle cx="9" cy="5" r="2.3" fill="none" stroke="#333" stroke-width="1.25"/></svg>
<span class="t" style="left:74.5px;top:384.8px;font-size:11.15px;color:#1a1a1a;">Черчение</span>
<svg style="left:25px;top:407px" width="18" height="10" viewBox="0 0 18 10"><path d="M1 5Q9 -3 17 5Q9 13 1 5z" fill="none" stroke="#333" stroke-width="1.25"/><circle cx="9" cy="5" r="2.3" fill="none" stroke="#333" stroke-width="1.25"/></svg>
<span class="t" style="left:74.5px;top:406.3px;font-size:11.15px;color:#1a1a1a;">Модификаторы Растяжения</span>
<svg style="left:25px;top:428.5px" width="18" height="10" viewBox="0 0 18 10"><path d="M1 5Q9 -3 17 5Q9 13 1 5z" fill="none" stroke="#333" stroke-width="1.25"/><circle cx="9" cy="5" r="2.3" fill="none" stroke="#333" stroke-width="1.25"/></svg>
<span class="t" style="left:74.5px;top:427.79999999999995px;font-size:11.15px;color:#1a1a1a;">Номинальная Ширина/Высота</span>
<svg style="left:25px;top:450.5px" width="18" height="10" viewBox="0 0 18 10"><path d="M1 5Q9 -3 17 5Q9 13 1 5z" fill="none" stroke="#333" stroke-width="1.25"/><circle cx="9" cy="5" r="2.3" fill="none" stroke="#333" stroke-width="1.25"/></svg>
<span class="t" style="left:74.5px;top:449.79999999999995px;font-size:11.15px;color:#1a1a1a;">Модификаторы Смещения</span>
<svg style="left:25px;top:472.5px" width="18" height="10" viewBox="0 0 18 10"><path d="M1 5Q9 -3 17 5Q9 13 1 5z" fill="none" stroke="#bbb" stroke-width="1.25"/><circle cx="9" cy="5" r="2.3" fill="none" stroke="#bbb" stroke-width="1.25"/></svg>
<span class="t" style="left:74.5px;top:471.79999999999995px;font-size:11.15px;color:#bbbbbb;">Привязка Проема</span>
<svg style="left:50.5px;top:358.5px" width="15" height="17" viewBox="0 0 15 17"><path d="M3 1h10a1.5 1.5 0 0 1 1.5 1.5V6H7v5h7.5v3.5A1.5 1.5 0 0 1 13 16H3a1.5 1.5 0 0 1-1.5-1.5v-12A1.5 1.5 0 0 1 3 1z" fill="#2a6fb8" stroke="#1a3552" stroke-width="1.6"/><path d="M3 4l2 2M3 9l2 2M3 13l2-1" stroke="#1a3552" stroke-width="0.8"/></svg>
<svg style="left:50.5px;top:380.5px" width="18" height="17" viewBox="0 0 18 17"><path d="M2 1h9.5v4H5v6h6.5v4H2z" fill="none" stroke="#333" stroke-width="1.4"/><path d="M0 8h14M4 0v17" stroke="#333" stroke-width="1"/><path d="M16 3.5v7M15 4.5h2M15 9.5h2" stroke="#333" stroke-width="1.4"/><path d="M6.5 7.5l1-1 1 1 1-1" stroke="#777" stroke-width="0.7" fill="none"/></svg>
<svg style="left:51px;top:403px" width="15" height="17" viewBox="0 0 15 17"><path d="M2 2v13M13 2v13M2 2h11M2 15h11" stroke="#555" stroke-width="1" stroke-dasharray="1.5 1.5"/><path d="M0 2h4M2 0v4M11 2h4M13 0v4M0 15h4M2 13v4M11 15h4M13 13v4" stroke="#444" stroke-width="0.9"/></svg>
<svg style="left:50.5px;top:424px" width="18" height="18" viewBox="0 0 18 18"><path d="M6.5 2.5H17M6.5 0.5v4M17 0.5v4" stroke="#333" stroke-width="1.1" fill="none"/><path d="M7 2.5l3-1.8v3.6zM16.5 2.5l-3-1.8v3.6z" fill="#333"/><path d="M2.5 6.5V17.5M0.5 6.5h4M0.5 17.5h4" stroke="#333" stroke-width="1.1" fill="none"/><path d="M2.5 7l-1.8 3h3.6zM2.5 17l-1.8-3h3.6z" fill="#333"/><path d="M2.5 6.5V4.5H6.5" stroke="#333" stroke-width="0.9" fill="none"/></svg>
<svg style="left:50.5px;top:446px" width="18" height="17" viewBox="0 0 18 17"><path d="M3 1h8.5a1.5 1.5 0 0 1 1.5 1.5V5H7v6h6v3.5a1.5 1.5 0 0 1-1.5 1.5H3a1.5 1.5 0 0 1-1.5-1.5v-12A1.5 1.5 0 0 1 3 1z" fill="none" stroke="#777" stroke-width="1.3"/><path d="M0 8h16M14 6l2 2-2 2M16 11v4" stroke="#222" stroke-width="1.3" fill="none"/></svg>
<svg style="left:52px;top:468px" width="12" height="18" viewBox="0 0 12 18"><path d="M2 1v16M10 1v16M5 3v12M7 3v12M2 1l3 2M10 1L7 3M2 17l3-2M10 17l-3-2" stroke="#666" stroke-width="1.1" fill="none"/></svg>
<div class="a" style="left:5px;top:470px;width:13px;height:13px;background:#fff;border:1.3px solid #222"></div>
<div class="sh" style="top:494px;height:20.5px"><i></i><span>Модификаторы</span></div>
<div class="a" style="left:0px;top:520px;width:249px;height:17.5px;background:#fff"></div>
<div class="a" style="left:21px;top:520px;width:1px;height:17.5px;background:#ececec"></div>
<div class="a" style="left:147.5px;top:520px;width:1.0px;height:17.5px;background:#ececec"></div>
<div class="a" style="left:173.5px;top:520px;width:1.0px;height:17.5px;background:#ececec"></div>
<span class="t" style="left:24.299999999999955px;top:523.5px;font-size:11.15px;color:#1a1a1a;">Имя</span>
<svg style="left:203px;top:526px" width="18" height="6" viewBox="0 0 18 6"><path d="M1 0v6M17 0v6M1 3h16" stroke="#333" stroke-width="1.3"/><path d="M1.5 3l3-2.5v5zM16.5 3l-3-2.5v5z" fill="#333"/></svg>
<div class="a" style="left:0px;top:537.5px;width:255.5px;height:138.0px;background:#fff"></div>
<div class="a" style="left:0px;top:559px;width:255.5px;height:1px;background:#ececec"></div>
<div class="a" style="left:0px;top:581px;width:255.5px;height:1px;background:#ececec"></div>
<div class="a" style="left:2px;top:592px;width:251px;height:1.2000000000000455px;background:#7a7a7a"></div>
<div class="a" style="left:0px;top:602px;width:255.5px;height:1px;background:#f0f0f0"></div>
<div class="a" style="left:5px;top:542px;width:13px;height:13px;background:#fff;border:1.3px solid #222"></div>
<div class="a" style="left:5px;top:563.5px;width:13px;height:13.0px;background:#fff;border:1.3px solid #222"></div>
<span class="t" style="left:24.299999999999955px;top:542.5px;font-size:11.15px;color:#1a1a1a;">Изменение Ширины</span>
<span class="t" style="left:24.299999999999955px;top:564px;font-size:11.15px;color:#1a1a1a;">Изменение Высоты</span>
<svg style="left:206.5px;top:548.5px" width="12" height="1.5" viewBox="0 0 12 1.5"><path d="M0 0.7H12" stroke="#bbb" stroke-width="1" stroke-dasharray="2.5 2"/></svg>
<svg style="left:206.5px;top:570px" width="12" height="1.5" viewBox="0 0 12 1.5"><path d="M0 0.7H12" stroke="#bbb" stroke-width="1" stroke-dasharray="2.5 2"/></svg>
<svg style="left:259.5px;top:544.5px" width="9" height="6" viewBox="0 0 9 6"><path d="M0.5 5.5L4.5 1 8.5 5.5" fill="none" stroke="#aaa" stroke-width="1.2"/></svg>
<svg style="left:259.5px;top:662.5px" width="9" height="6" viewBox="0 0 9 6"><path d="M0.5 0.5L4.5 5 8.5 0.5" fill="none" stroke="#aaa" stroke-width="1.2"/></svg>
<svg style="left:10px;top:682px" width="20" height="19" viewBox="0 0 20 19"><path d="M0 5.5h5M0 9h6M0 12.5h7" stroke="#888" stroke-width="1.4"/><path d="M0 17h19" stroke="#222" stroke-width="2"/><circle cx="13" cy="5.5" r="5" fill="#f0f0f0" stroke="#3a80e0" stroke-width="1.4"/><path d="M13 3v5M10.5 5.5h5" stroke="#3a80e0" stroke-width="1.4"/></svg>
<svg style="left:45px;top:684px" width="14.5" height="16" viewBox="0 0 14.5 16"><path d="M1 1l12.5 14M13.5 1L1 15" stroke="#f0a08e" stroke-width="1.8"/></svg>
<div class="sh" style="top:712.5px;height:21.0px"><i class="r"></i><span style="top:5px">Компоненты - По Умолчанию</span></div>
<div class="sh" style="top:736.5px;height:21.200000000000045px"><i class="r"></i><span style="top:5px">Единые Контуры Профиля</span></div></div>
</body></html>
